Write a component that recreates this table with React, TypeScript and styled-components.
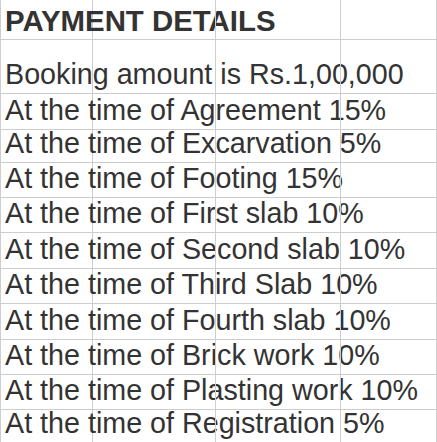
import React from "react";
import styled, { createGlobalStyle } from "styled-components";

const GlobalStyle = createGlobalStyle`
  html, body {
    margin: 0;
    padding: 0;
    background: #ffffff;
  }
  body {
    font-family: "Liberation Sans", Arial, sans-serif;
  }
`;

const GRID = "#cdcdcd";

const Sheet = styled.div`
  width: 437px;
  height: 442px;
  overflow: hidden;
  border-left: 1px solid ${GRID};
  box-sizing: border-box;
  display: flex;
  flex-direction: column;
`;

const Row = styled.div<{ $h: number }>`
  display: grid;
  grid-template-columns: 92px 123px 125px 1fr;
  height: ${(p) => p.$h}px;
  flex-shrink: 0;
`;

const Cell = styled.div`
  box-sizing: border-box;
  border-right: 1px solid ${GRID};
  border-bottom: 1px solid ${GRID};
  display: flex;
  align-items: flex-end;
  overflow: visible;
  min-width: 0;
`;

const Label = styled.span<{ $bold?: boolean }>`
  white-space: nowrap;
  font-size: ${(p) => (p.$bold ? "29.4px" : "28.7px")};
  line-height: 33px;
  font-weight: ${(p) => (p.$bold ? 700 : 400)};
  color: #333333;
  padding: 0 0 2px 4px;
`;

const rows: { text: string; h: number; bold?: boolean }[] = [
  { text: "PAYMENT DETAILS", h: 40, bold: true },
  { text: "Booking amount is Rs.1,00,000", h: 54 },
  { text: "At the time of Agreement 15%", h: 33 },
  { text: "At the time of Excarvation 5%", h: 35 },
  { text: "At the time of Footing 15%", h: 35 },
  { text: "At the time of First slab 10%", h: 36 },
  { text: "At the time of Second slab 10%", h: 35 },
  { text: "At the time of Third Slab 10%", h: 36 },
  { text: "At the time of Fourth slab 10%", h: 35 },
  { text: "At the time of Brick work 10%", h: 35 },
  { text: "At the time of Plasting work 10%", h: 33 },
  { text: "At the time of Registration 5%", h: 34 },
  { text: "", h: 20 },
];

export default function App() {
  return (
    <>
      <GlobalStyle />
      <Sheet>
        {rows.map((r, i) => (
          <Row key={i} $h={r.h}>
            <Cell>
              {r.text && <Label $bold={r.bold}>{r.text}</Label>}
            </Cell>
            <Cell />
            <Cell />
            <Cell />
          </Row>
        ))}
      </Sheet>
    </>
  );
}
